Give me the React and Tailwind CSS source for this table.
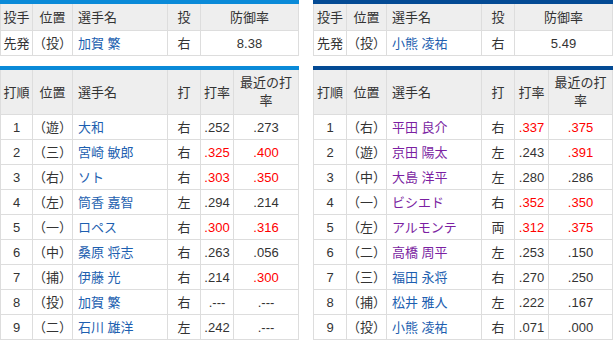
import React from "react";

const FONT = { fontFamily: '"Liberation Sans", "Noto Sans CJK JP", sans-serif' };

const leftTop = [
  { pos: "先発", p: "（投）", name: "加賀 繁", hand: "右", era: "8.38" },
];
const rightTop = [
  { pos: "先発", p: "（投）", name: "小熊 凌祐", hand: "右", era: "5.49" },
];

const leftBat = [
  ["1", "（遊）", "大和", "右", ".252", ".273", false, false, false],
  ["2", "（三）", "宮崎 敏郎", "右", ".325", ".400", true, true, false],
  ["3", "（右）", "ソト", "右", ".303", ".350", true, true, false],
  ["4", "（左）", "筒香 嘉智", "左", ".294", ".214", false, false, false],
  ["5", "（一）", "ロペス", "右", ".300", ".316", true, true, false],
  ["6", "（中）", "桑原 将志", "右", ".263", ".056", false, false, false],
  ["7", "（捕）", "伊藤 光", "右", ".214", ".300", false, true, false],
  ["8", "（投）", "加賀 繁", "右", ".---", ".---", false, false, false],
  ["9", "（二）", "石川 雄洋", "左", ".242", ".---", false, false, false],
];

const rightBat = [
  ["1", "（右）", "平田 良介", "右", ".337", ".375", true, true, true],
  ["2", "（遊）", "京田 陽太", "左", ".243", ".391", false, true, true],
  ["3", "（中）", "大島 洋平", "左", ".280", ".286", false, false, true],
  ["4", "（一）", "ビシエド", "右", ".352", ".350", true, true, true],
  ["5", "（左）", "アルモンテ", "両", ".312", ".375", true, true, true],
  ["6", "（二）", "高橋 周平", "左", ".253", ".150", false, false, true],
  ["7", "（三）", "福田 永将", "右", ".270", ".250", false, false, false],
  ["8", "（捕）", "松井 雅人", "左", ".222", ".167", false, false, false],
  ["9", "（投）", "小熊 凌祐", "右", ".071", ".000", false, false, false],
];

function Cell({ children, className = "", first = false }) {
  return (
    <div
      className={
        "flex items-center border-r border-b border-[#dddddd] " +
        (first ? "border-l " : "") +
        className
      }
    >
      {children}
    </div>
  );
}

function TopTable({ bar, cols, rows }) {
  return (
    <div className={"border-t-4 " + bar}>
      <div className={"grid " + cols}>
        <Cell first className="h-[27px] justify-center bg-[#eeeeee]">投手</Cell>
        <Cell className="h-[27px] justify-center bg-[#eeeeee]">位置</Cell>
        <Cell className="h-[27px] justify-start pl-[5px] bg-[#eeeeee]">選手名</Cell>
        <Cell className="h-[27px] justify-center bg-[#eeeeee]">投</Cell>
        <Cell className="h-[27px] justify-center bg-[#eeeeee]">防御率</Cell>
        {rows.map((r, i) => (
          <React.Fragment key={i}>
            <Cell first className="h-[25px] justify-center">{r.pos}</Cell>
            <Cell className="h-[25px] justify-center whitespace-nowrap">{r.p}</Cell>
            <Cell className="h-[25px] justify-start pl-[5px] text-[#1d5fb0]">{r.name}</Cell>
            <Cell className="h-[25px] justify-center">{r.hand}</Cell>
            <Cell className="h-[25px] justify-center">{r.era}</Cell>
          </React.Fragment>
        ))}
      </div>
    </div>
  );
}

function BatTable({ bar, cols, rows }) {
  return (
    <div className={"mt-[10px] border-t-4 " + bar}>
      <div className={"grid " + cols}>
        <Cell first className="h-[45px] justify-center bg-[#eeeeee]">打順</Cell>
        <Cell className="h-[45px] justify-center bg-[#eeeeee]">位置</Cell>
        <Cell className="h-[45px] justify-start pl-[5px] bg-[#eeeeee]">選手名</Cell>
        <Cell className="h-[45px] justify-center bg-[#eeeeee]">打</Cell>
        <Cell className="h-[45px] justify-center bg-[#eeeeee]">打率</Cell>
        <Cell className="h-[45px] justify-center bg-[#eeeeee] text-center leading-[18px] px-[5px]">
          最近の打率
        </Cell>
        {rows.map((r, i) => (
          <React.Fragment key={i}>
            <Cell first className="h-[25px] justify-center">{r[0]}</Cell>
            <Cell className="h-[25px] justify-center whitespace-nowrap">{r[1]}</Cell>
            <Cell
              className={
                "h-[25px] justify-start pl-[5px] " +
                (r[8] ? "text-[#7b1fa2]" : "text-[#1d5fb0]")
              }
            >
              {r[2]}
            </Cell>
            <Cell className="h-[25px] justify-center">{r[3]}</Cell>
            <Cell className={"h-[25px] justify-center " + (r[6] ? "text-[#ff0000]" : "")}>
              {r[4]}
            </Cell>
            <Cell className={"h-[25px] justify-center " + (r[7] ? "text-[#ff0000]" : "")}>
              {r[5]}
            </Cell>
          </React.Fragment>
        ))}
      </div>
    </div>
  );
}

export default function App() {
  return (
    <div
      className="flex gap-[14px] w-[613px] h-[342px] overflow-hidden bg-white text-[13px] leading-[17px] text-[#333333]"
      style={FONT}
    >
      <div className="w-[299px] shrink-0">
        <TopTable
          bar="border-[#0a8ad8]"
          cols="grid-cols-[33px_40px_95px_33px_98px]"
          rows={leftTop}
        />
        <BatTable
          bar="border-[#0a8ad8]"
          cols="grid-cols-[33px_40px_95px_33px_33px_65px]"
          rows={leftBat}
        />
      </div>
      <div className="w-[300px] shrink-0">
        <TopTable
          bar="border-[#034a94]"
          cols="grid-cols-[34px_40px_95px_33px_98px]"
          rows={rightTop}
        />
        <BatTable
          bar="border-[#034a94]"
          cols="grid-cols-[34px_40px_95px_33px_34px_64px]"
          rows={rightBat}
        />
      </div>
    </div>
  );
}
